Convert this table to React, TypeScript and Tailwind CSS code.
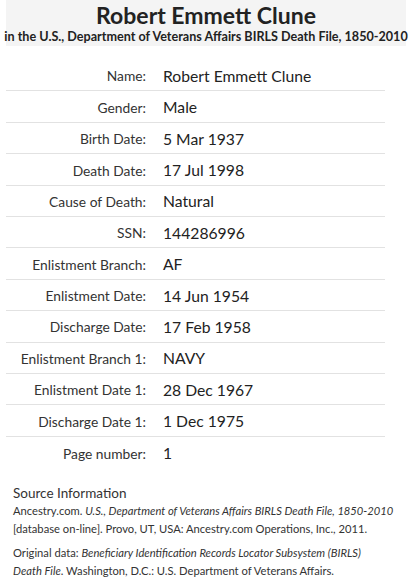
import React from 'react';

const rows: [string, string][] = [
  ['Name:', 'Robert Emmett Clune'],
  ['Gender:', 'Male'],
  ['Birth Date:', '5 Mar 1937'],
  ['Death Date:', '17 Jul 1998'],
  ['Cause of Death:', 'Natural'],
  ['SSN:', '144286996'],
  ['Enlistment Branch:', 'AF'],
  ['Enlistment Date:', '14 Jun 1954'],
  ['Discharge Date:', '17 Feb 1958'],
  ['Enlistment Branch 1:', 'NAVY'],
  ['Enlistment Date 1:', '28 Dec 1967'],
  ['Discharge Date 1:', '1 Dec 1975'],
  ['Page number:', '1'],
];

export default function App() {
  return (
    <div className="w-[411px] h-[586px] bg-white text-[#222] px-[6px] font-['Lato',sans-serif]">
      <div className="w-[400px] h-[46px] bg-[#f4f4f4] flex flex-col items-center pt-[1px]">
        <h1 className="text-[23px] leading-[28px] font-bold whitespace-nowrap">Robert Emmett Clune</h1>
        <p className="text-[12.6px] leading-[16px] font-bold whitespace-nowrap">
          in the U.S., Department of Veterans Affairs BIRLS Death File, 1850-2010
        </p>
      </div>

      <div className="mt-[14px] w-[379px]">
        {rows.map(([label, value], i) => (
          <div
            key={label}
            className={`h-[31.4px] flex items-center pt-[3px] ${i < rows.length - 1 ? 'border-b border-[#e2e2e2]' : ''}`}
          >
            <div className="w-[140px] text-right text-[13.8px] text-[#333]">{label}</div>
            <div className="ml-[17px] text-[15.7px] text-[#222]">{value}</div>
          </div>
        ))}
      </div>

      <div className="mt-[16px] px-[7px] text-[#333]">
        <div className="text-[13.5px] leading-[18px]">Source Information</div>
        <p className="text-[11.2px] leading-[18px]">
          Ancestry.com. <i>U.S., Department of Veterans Affairs BIRLS Death File, 1850-2010</i>
          <br />
          [database on-line]. Provo, UT, USA: Ancestry.com Operations, Inc., 2011.
        </p>
        <p className="mt-[6px] text-[11.2px] leading-[18px]">
          Original data: <i>Beneficiary Identification Records Locator Subsystem (BIRLS)</i>
          <br />
          <i>Death File</i>. Washington, D.C.: U.S. Department of Veterans Affairs.
        </p>
      </div>
    </div>
  );
}
